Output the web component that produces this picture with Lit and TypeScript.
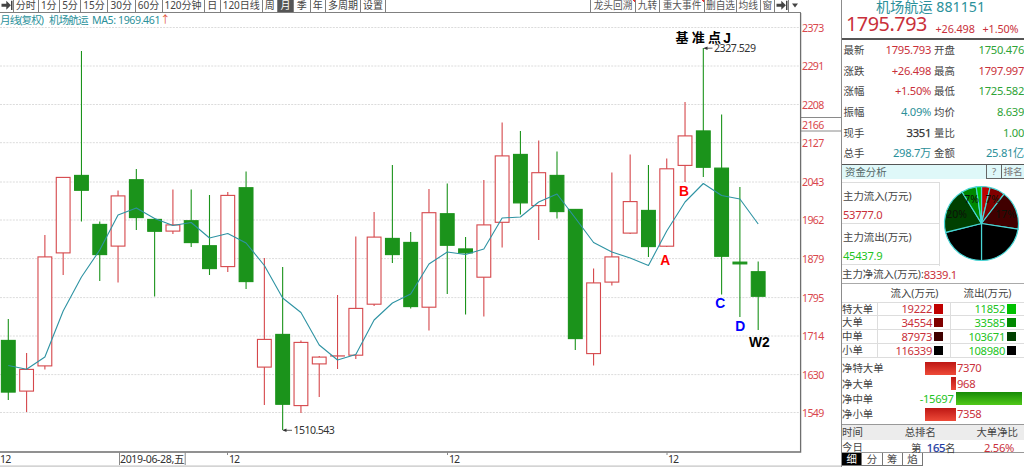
import { LitElement, html, svg, css } from 'lit';
import { customElement, property } from 'lit/decorators.js';
import { classMap } from 'lit/directives/class-map.js';

// [high, low, bodyTop, bodyBottom, rising]
type Candle = [number, number, number, number, 0 | 1];

const CANDLES: Candle[] = [
  [319, 400, 340, 392.5, 0], [353, 412, 369, 391.5, 1], [235, 369.5, 256.5, 366.3, 1],
  [177, 275, 177, 253.3, 1], [51, 221.5, 175, 190.7, 0], [221.5, 281, 224, 255, 0],
  [190.5, 282.5, 195.5, 246.5, 1], [169, 230, 179.3, 218, 0], [218, 296.5, 219, 231.7, 0],
  [189.5, 234, 224.5, 231.5, 1], [189.5, 247, 220.3, 243, 0], [195, 275, 245.3, 269, 0],
  [192, 272, 195, 267, 1], [171.5, 289, 187.3, 282, 0], [258, 405, 339, 367.5, 1],
  [267, 430, 334, 404.7, 0], [340.5, 413, 342, 406, 1], [356, 397, 356.7, 364.3, 1],
  [295, 369, 355.5, 355.5, 1], [236.5, 359, 308, 355.6, 1], [212, 306, 236.7, 304.6, 1],
  [165, 263, 238, 255, 0], [232, 308.5, 242, 307, 0], [189, 330.5, 212.3, 307.6, 1],
  [183.5, 294, 213.3, 245.7, 0], [237, 314.5, 248.5, 253.3, 0], [180, 316.5, 224.5, 277.6, 1],
  [122.5, 247.5, 155.5, 222.7, 1], [131, 214.5, 154, 203.3, 0], [140.5, 240, 172.3, 206, 1],
  [151.5, 218.5, 175, 212, 0], [209, 350, 209, 339, 0], [268.5, 365.5, 282.5, 354, 1],
  [172.5, 285.5, 256.5, 282.5, 1], [154.5, 234, 201.2, 233.5, 1], [165, 257, 210, 247, 0],
  [158.5, 247, 168.4, 246.6, 1], [102, 182, 135.5, 165.8, 1], [48, 177, 130.5, 167.7, 0],
  [114.5, 294.5, 167.7, 256.7, 0], [187, 317, 261.7, 264.3, 0], [261.5, 330, 271.3, 296.7, 0],
];

const MA5 = [
  365.5, 369.3, 357, 311, 277, 250, 215, 208, 218.5, 225.5, 222.5, 238, 233.5, 243, 265.5,
  298, 312.5, 345, 360, 354.5, 320, 303, 294, 264, 252, 254.5, 249, 218, 217, 202, 194, 218,
  242.5, 252, 258, 265.5, 231, 202, 183.5, 195.5, 199, 224,
];

const LEVELS: [number, number][] = [
  [2373, 27.5], [2291, 66], [2208, 104.5], [2127, 142.7], [2043, 182], [1962, 220],
  [1879, 258.6], [1795, 297.6], [1714, 336], [1630, 374.6], [1549, 412.5],
];

const candleX = (i: number) => 8.3 + i * 18.29;

@customElement('k-chart')
export class KChart extends LitElement {
  static styles = css`
    :host { display: block; height: 100%; }
    svg { display: block; font-family: 'Noto Sans', 'Noto Sans CJK SC', sans-serif; font-size: 10.6px; fill: #333; }
    .grid { stroke: #dcdcdc; stroke-width: 1; stroke-dasharray: 2 1.2; }
    .axis { stroke: #6e6e6e; stroke-width: 1.3; fill: none; }
    .thin { stroke: #8a8a8a; stroke-width: 1; fill: none; }
    .up { stroke: #d5474b; stroke-width: 1.1; fill: #fff; }
    .down { stroke: #1b931b; stroke-width: 1.1; fill: #1b931b; }
    .ma { stroke: #2e93a3; stroke-width: 1.1; fill: none; stroke-linejoin: round; }
    .level { fill: #d9484d; }
    .teal { fill: #2b919b; }
    .alert { fill: #e2583e; }
    .mark { font: bold 13.8px 'Liberation Sans', sans-serif; text-anchor: middle; }
    .red { fill: #f00; }
    .blue { fill: #00f; }
    .black { fill: #000; }
    .base { font: bold 13px 'Noto Sans CJK SC', sans-serif; fill: #000; }
    .arrow { stroke: #333; stroke-width: 0.8; }
  `;

  private candle([high, low, top, bottom, rising]: Candle, i: number) {
    const x = candleX(i);
    return svg`<g class=${rising ? 'up' : 'down'}>
      <line x1=${x} x2=${x} y1=${high} y2=${low}></line>
      <rect x=${x - 6.9} y=${top + 0.4} width="13.8" height=${Math.max(bottom - top - 0.8, 0.1)}></rect>
    </g>`;
  }

  render() {
    return html`
      <svg width="841" height="454" viewBox="0 13 841 454">
        <text class="teal" x="0" y="23.5" textLength="44">月线(复权)</text>
        <text class="teal" x="49" y="23.5" textLength="39.5">机场航运</text>
        <text class="teal" x="92" y="23.5" textLength="68.5">MA5: 1969.461</text>
        <text class="alert" x="160" y="23" textLength="6">↑</text>

        ${LEVELS.map(([value, y]) => svg`
          <line class="grid" x1="0" x2="800" y1=${y} y2=${y}></line>
          <text class="level" x="802" y=${y + 4} textLength="22.3">${value}</text>`)}
        <path class="thin" d="M800.5 117.5H841M800.5 131H841"></path>
        <text class="level" x="802" y="128.5" textLength="22.3">2166</text>

        ${CANDLES.map((c, i) => this.candle(c, i))}
        <polyline class="ma" points=${MA5.map((y, i) => `${candleX(i)},${y}`).join(' ')}></polyline>

        <path class="arrow" d="M283.5 430.3H292"></path>
        <path d="M282.5 430.3l4-1.8v3.6z"></path>
        <text x="293.5" y="434.3" textLength="41.3">1510.543</text>
        <path class="arrow" d="M704.5 48.2H712.5"></path>
        <path d="M703.5 48.2l4-1.8v3.6z"></path>
        <text x="714" y="52.3" textLength="42">2327.529</text>

        <text class="base" x="675.5 691.7 708" y="42.3">基准点</text>
        <text class="mark black" x="727" y="42.5">J</text>
        <text class="mark red" x="665.2" y="265.4">A</text>
        <text class="mark red" x="684" y="196.4">B</text>
        <text class="mark blue" x="720.3" y="307.8">C</text>
        <text class="mark blue" x="740.3" y="330.8">D</text>
        <text class="mark black" x="759.3" y="347">W2</text>

        <path class="axis" d="M800.6 0V452H0"></path>
        <path class="thin" d="M119.5 452V465M185.2 452V465M227.5 452v3M447.5 452v3M667 452v3"></path>
        <text x="0" y="463.3" textLength="11.3">12</text>
        <text x="120" y="463.3" textLength="64.5">2019-06-28,五</text>
        <text x="229" y="463.3" textLength="11">12</text>
        <text x="449" y="463.3" textLength="11">12</text>
        <text x="668" y="463.3" textLength="11">12</text>
        <rect x="0" y="465.3" width="841" height="1.7" fill="#d4d4d4"></rect>
      </svg>
    `;
  }
}

interface Flow { name: string; inflow: number; outflow: number; red: string; green: string; }

const FLOWS: Flow[] = [
  { name: '特大单', inflow: 19222, outflow: 11852, red: '#c00000', green: '#00c000' },
  { name: '大单', inflow: 34554, outflow: 33585, red: '#800000', green: '#008800' },
  { name: '中单', inflow: 87973, outflow: 103671, red: '#400000', green: '#004000' },
  { name: '小单', inflow: 116339, outflow: 108980, red: '#000000', green: '#000000' },
];

const NETS = [
  { name: '净特大单', value: 7370, bar: 31 },
  { name: '净大单', value: 968, bar: 4.5 },
  { name: '净中单', value: -15697, bar: 66 },
  { name: '净小单', value: 7358, bar: 31 },
];

@customElement('flow-pie')
export class FlowPie extends LitElement {
  static styles = css`
    :host { display: block; }
    svg { display: block; }
    path { stroke: #48d6d6; stroke-width: 1.2; }
    text { font: 10.5px 'Noto Sans', sans-serif; fill: #0c1208; text-anchor: middle; }
  `;

  @property({ attribute: false }) flows: Flow[] = [];

  render() {
    const slices = [
      ...this.flows.map((f) => ({ value: f.inflow, color: f.red })),
      ...[...this.flows].reverse().map((f) => ({ value: f.outflow, color: f.green })),
    ];
    const total = slices.reduce((sum, s) => sum + s.value, 0);
    const point = (sum: number) => {
      const a = (sum / total) * Math.PI * 2;
      return `${41.5 + 37 * Math.sin(a)} ${41.5 - 37 * Math.cos(a)}`;
    };
    let sum = 0;
    return html`
      <svg width="84" height="84" viewBox="0 0 84 84">
        ${slices.map((s) => {
          const from = point(sum);
          sum += s.value;
          return svg`<path fill=${s.color} d="M41.5 41.5L${from}A37 37 0 0 1 ${point(sum)}Z"></path>`;
        })}
        <text x="31.5" y="21">7%</text>
        <text x="52.5" y="21">7%</text>
        <text x="65.5" y="35.5">17%</text>
        <text x="16.5" y="35.5">20%</text>
      </svg>
    `;
  }
}

const QUOTES = [
  ['最新', '1795.793', 'red', '开盘', '1750.476', 'green'],
  ['涨跌', '+26.498', 'red', '最高', '1797.997', 'red'],
  ['涨幅', '+1.50%', 'red', '最低', '1725.582', 'green'],
  ['振幅', '4.09%', 'teal', '均价', '8.639', 'green'],
  ['现手', '3351', 'dark', '量比', '1.00', 'green'],
  ['总手', '298.7万', 'teal', '金额', '25.81亿', 'teal'],
];

@customElement('quote-panel')
export class QuotePanel extends LitElement {
  static styles = css`
    :host {
      display: flex;
      flex-direction: column;
      flex: none;
      width: 183px;
      height: 467px;
      box-sizing: border-box;
      border-left: 1px solid #8c8c8c;
      overflow: hidden;
      font-family: 'Noto Sans', 'Noto Sans CJK SC', sans-serif;
      font-size: 10.4px;
      line-height: 12px;
      color: #444;
      white-space: nowrap;
    }
    .num { font-size: 11.2px; letter-spacing: -0.3px; }
    .red { color: #c9303a; }
    .green { color: #2ea336; }
    .bright { color: #22c322; }
    .teal { color: #2b8f99; }
    .dark { color: #333; -webkit-text-stroke: 0.25px #333; }
    .head { height: 38px; border-bottom: 2px solid #555; }
    .title { height: 14px; line-height: 14px; font-size: 14.2px; color: #2b919b; text-align: center; padding-right: 5px; }
    .price { display: flex; height: 23px; line-height: 20px; padding-left: 4px; }
    .price b { flex: none; font-weight: 400; font-size: 19.8px; letter-spacing: -0.45px; width: 89.5px; color: #c9303a; }
    .price span { flex: none; width: 47px; line-height: 29px; color: #c9303a; font-size: 10.8px; letter-spacing: -0.1px; }
    .quotes { display: grid; grid-template-columns: 26px 63px 27px 66px; grid-auto-rows: 20.6px; align-items: center; height: 123.5px; border-bottom: 1.5px solid #555; }
    .quotes .num { text-align: right; }
    .quotes .label { padding-left: 1.5px; }
    .quotes .second { padding-left: 3px; }
    .bar { display: flex; height: 14px; line-height: 14px; background: #dff8f9; color: #566; }
    .bar .name { flex: 1; padding-left: 3px; }
    .bar .btn { border: 1px solid #666; border-top: 0; height: 13px; width: 14px; text-align: center; color: #777; font-size: 9.6px; }
    .bar .rank { width: 22px; border-left: 0; border-right: 0; }
    .funds { display: grid; grid-template-columns: 98px 84px; height: 84px; padding-top: 3px; }
    .main { border-right: 1px solid #ddd; border-top: 1px solid #ddd; }
    .main div { height: 41px; border-bottom: 1px solid #ddd; box-sizing: border-box; padding: 7px 0 0 1px; }
    .main .num { display: block; margin-top: 7px; }
    .net { height: 17px; line-height: 17px; border-bottom: 1.5px solid #aaa; display: flex; }
    .cell { display: flex; align-items: center; justify-content: flex-end; }
    .flows { display: grid; grid-template-columns: 36px 73px 73px; grid-template-rows: 19px repeat(4, 13.8px); height: 76px; }
    .flows > * { border-right: 1px solid #ddd; border-bottom: 1px solid #ddd; box-sizing: border-box; line-height: 13px; }
    .flows > :nth-child(3n) { border-right: 0; }
    .flows > :nth-child(-n + 3) { border-right: 0; line-height: 19px; text-align: center; }
    .flows .cell { padding-right: 7px; }
    .flows .out { padding-right: 8px; }
    .box { width: 9px; height: 9.5px; margin-left: 2px; }
    .nets { display: grid; grid-auto-rows: 15.4px; height: 64px; padding-top: 1px; box-sizing: border-box; }
    .row { display: grid; grid-template-columns: 113.5px 68.5px; align-items: center; }
    .left { display: flex; align-items: center; justify-content: space-between; }
    .left .num { padding-right: 2px; }
    .right { display: flex; align-items: center; }
    .meter { height: 13px; flex: none; }
    .rise { background: linear-gradient(#bd1714, #ee4a38); }
    .fall { background: linear-gradient(#168b06, #50c818); }
    .right .num { padding-left: 1.5px; }
    .ranks { display: grid; grid-template-columns: 60px 50px 72px; height: 29px; grid-template-rows: 15px 13px; border-top: 1px solid #999; border-bottom: 1px solid #999; box-sizing: border-box; }
    .ranks > * { line-height: 15px; }
    .ranks > :nth-child(-n + 3) { background: #ececec; }
    .ranks .end { text-align: right; padding-right: 6px; }
    .ranks .blue { color: #2038a0; -webkit-text-stroke: 0.25px #2038a0; }
    .ranks .end.num { padding-right: 10px; }
    .place { margin-left: 9px; }
    .tabs { display: flex; }
    .tabs span { width: 19.3px; height: 12px; line-height: 12px; border: solid #777; border-width: 0 1px 1px 0; text-align: center; }
    .tabs .on { background: #000; color: #fff; }
  `;

  render() {
    return html`
      <div class="head">
        <div class="title">机场航运 881151</div>
        <div class="price"><b>1795.793</b><span>+26.498</span><span>+1.50%</span></div>
      </div>
      <div class="quotes">
        ${QUOTES.map(([a, av, ac, b, bv, bc]) => html`
          <span class="label">${a}</span><span class="num ${ac}">${av}</span>
          <span class="second">${b}</span><span class="num ${bc}">${bv}</span>`)}
      </div>
      <div class="bar"><span class="name">资金分析</span><span class="btn">?</span><span class="btn rank">排名</span></div>
      <div class="funds">
        <div class="main">
          <div>主力流入(万元)<span class="num red">53777.0</span></div>
          <div>主力流出(万元)<span class="num bright">45437.9</span></div>
        </div>
        <flow-pie .flows=${FLOWS}></flow-pie>
      </div>
      <div class="net">主力净流入(万元):<span class="num red">8339.1</span></div>
      <div class="flows">
        <span></span><span>流入(万元)</span><span>流出(万元)</span>
        ${FLOWS.map((f) => html`
          <span>${f.name}</span>
          <span class="cell num red">${f.inflow}<i class="box" style="background:${f.red}"></i></span>
          <span class="cell out num bright">${f.outflow}<i class="box" style="background:${f.green}"></i></span>`)}
      </div>
      <div class="nets">
        ${NETS.map((n) => {
          const rise = n.value > 0;
          const bar = html`<i class="meter ${rise ? 'rise' : 'fall'}" style="width:${n.bar}px"></i>`;
          const num = html`<span class="num ${rise ? 'red' : 'bright'}">${n.value}</span>`;
          return html`<div class="row">
            <div class="left"><span>${n.name}</span>${rise ? bar : num}</div>
            <div class="right">${rise ? num : bar}</div>
          </div>`;
        })}
      </div>
      <div class="ranks">
        <span>时间</span><span>&nbsp;总排名</span><span class="end">大单净比</span>
        <span>今日</span><span class="place">第&nbsp; <span class="num blue">165</span>名</span><span class="end num red">2.56%</span>
      </div>
      <div class="tabs">
        ${['细', '分', '筹', '焰'].map((t, i) => html`<span class=${classMap({ on: i === 0 })}>${t}</span>`)}
      </div>
    `;
  }
}

const PERIODS = ['分时', '1分', '5分', '15分', '30分', '60分', '120分钟', '日', '120日线', '周', '月', '季', '年', '多周期', '设置'];
const TOOLS = ['龙头回溯', '九转', '重大事件', '删自选', '均线', '窗'];

@customElement('app-root')
export class AppRoot extends LitElement {
  static styles = css`
    :host { display: flex; width: 1024px; height: 467px; background: #fff; overflow: hidden; }
    .stage { width: 841px; flex: none; }
    .toolbar {
      display: flex;
      justify-content: space-between;
      width: 801px;
      height: 13px;
      box-sizing: border-box;
      border-bottom: 1.4px solid #808080;
      font: 10px/11px 'Noto Sans', 'Noto Sans CJK SC', sans-serif;
      color: #444;
      white-space: nowrap;
    }
    .periods, .tools { display: grid; }
    .periods { grid-template-columns: 14px 24.5px 21.5px 21px 27px 27.5px 27px 42px 16.5px 41.5px 15.5px 16px 16.5px 15.5px 35px 25px; }
    .tools { grid-template-columns: 45px 24px 45px 32px 23.5px 14.5px 14px 12px; border-left: 1px solid #808080; }
    .item { border-right: 1px solid #808080; text-align: center; height: 12px; }
    .on { background: #555; color: #fff; }
    .tools .item { color: #555; font-size: 9.7px; }
    .tools .hot { background: linear-gradient(225deg, #e33 2px, transparent 2px); }
    .tools .plain { border-right: 0; }
    svg { display: block; fill: #444; margin: 0 auto; }
  `;

  private jump() {
    return html`<svg width="12" height="11" viewBox="0 0 12 11">
      <path d="M0.5 3.7H5.3V0.8L9.9 5.3L5.3 9.8V6.8H0.5ZM10 0.7H11.5V10H10Z"></path>
    </svg>`;
  }

  render() {
    return html`
      <div class="stage">
        <div class="toolbar">
          <div class="periods">
            <span class="item">${this.jump()}</span>
            ${PERIODS.map((p) => html`<span class=${classMap({ item: true, on: p === '月' })}>${p}</span>`)}
          </div>
          <div class="tools">
            ${TOOLS.map((t, i) => html`<span class=${classMap({ item: true, hot: i === 0 || i === 2 })}>${t}</span>`)}
            <span class="item">${this.jump()}</span>
            <span class="item plain"><svg width="10" height="11" viewBox="0 0 10 11"><path d="M2 3.5H8L5 7.5Z"></path></svg></span>
          </div>
        </div>
        <k-chart></k-chart>
      </div>
      <quote-panel></quote-panel>
    `;
  }
}
